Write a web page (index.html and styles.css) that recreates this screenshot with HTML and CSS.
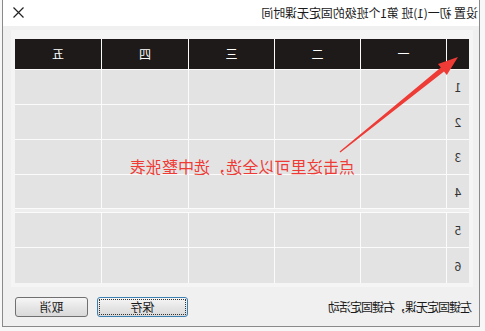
FILE: index.html
```html
<!DOCTYPE html>
<html lang="zh-CN">
<head>
    <meta charset="UTF-8">
    <meta name="viewport" content="width=device-width, initial-scale=1.0">
    <title>设置固定无课时间</title>
    <link rel="stylesheet" href="styles.css">
</head>
<body>
    <div class="stage">
        <div class="window">
            <div class="titlebar">
                <span class="title">设置 初一(1)班 第1个班级的固定无课时间</span>
                <svg class="close" width="11" height="11" viewBox="0 0 11 11">
                    <path d="M0.5 0.5 L10.5 10.5 M10.5 0.5 L0.5 10.5" stroke="#222" stroke-width="1.2" fill="none"/>
                </svg>
            </div>
            <div class="content">
                <div class="panel">
                    <div class="grid">
                        <div class="head"></div>
                        <div class="head">一</div>
                        <div class="head">二</div>
                        <div class="head">三</div>
                        <div class="head">四</div>
                        <div class="head">五</div>

                        <div class="num">1</div>
                        <div class="cell"></div><div class="cell"></div><div class="cell"></div><div class="cell"></div><div class="cell"></div>
                        <div class="num">2</div>
                        <div class="cell"></div><div class="cell"></div><div class="cell"></div><div class="cell"></div><div class="cell"></div>
                        <div class="num">3</div>
                        <div class="cell"></div><div class="cell"></div><div class="cell"></div><div class="cell"></div><div class="cell"></div>
                        <div class="num">4</div>
                        <div class="cell"></div><div class="cell"></div><div class="cell"></div><div class="cell"></div><div class="cell"></div>

                        <div class="split"></div>

                        <div class="num">5</div>
                        <div class="cell"></div><div class="cell"></div><div class="cell"></div><div class="cell"></div><div class="cell"></div>
                        <div class="num">6</div>
                        <div class="cell"></div><div class="cell"></div><div class="cell"></div><div class="cell"></div><div class="cell"></div>
                    </div>
                </div>
                <div class="footer">
                    <span class="hint">左键固定无课，右键固定活动</span>
                    <div class="buttons">
                        <button class="btn btn-save"><span>保存</span></button>
                        <button class="btn btn-cancel"><span>取消</span></button>
                    </div>
                </div>
            </div>
        </div>

        <!-- 标注：箭头和说明文字 -->
        <div class="note">点击这里可以全选，选中整张表</div>
        <svg class="arrow" width="485" height="331" viewBox="0 0 485 331">
            <polygon points="145.4,151.5 44.2,67.6 47.0,64.0 27,57 38.2,75.0 41.0,71.4 144.6,152.5" fill="#ee3b36"/>
        </svg>
    </div>
</body>
</html>
```

FILE: styles.css
```css
body {
    margin: 0;
    background: #f7f7f7;
    font-family: "Noto Sans CJK SC", "Noto Sans", sans-serif;
    font-size: 12px;
    color: #1a1a1a;
}

/* 整个截图是水平镜像的 */
.stage {
    position: relative;
    width: 485px;
    height: 331px;
    overflow: hidden;
    transform: scaleX(-1);
}

.window {
    margin-left: 5px;
    width: 476px;
    height: 326px;
    border: 1px solid #8a8a8a;
    border-top: none;
    background: #f0f0f0;
    display: flex;
    flex-direction: column;
}

.titlebar {
    height: 26px;
    background: #ffffff;
    display: flex;
    align-items: center;
    justify-content: space-between;
    padding: 0 10px 0 1px;
}

.title {
    line-height: 14px;
    letter-spacing: -0.1px;
}

.close {
    display: block;
    margin-top: -1px;
}

.content {
    flex: 1;
    padding: 4px 8px 0 6px;
    display: flex;
    flex-direction: column;
}

.panel {
    background: #f5f5f5;
    padding: 9px 4px 4px 4px;
}

.grid {
    display: grid;
    grid-template-columns: 22px 85px 85px 85px 86px 86px;
    grid-template-rows: 30px 34px 34px 34px 33px 3px 34px 35px;
    gap: 1px;
    background: #fbfbfb;
}

.head {
    background: #1e1a19;
    color: #ffffff;
    display: flex;
    align-items: center;
    justify-content: center;
    line-height: 14px;
}

.num {
    background: #e3e3e3;
    display: flex;
    align-items: center;
    justify-content: center;
    color: #333;
    line-height: 14px;
}

.cell {
    background: #e3e3e3;
}

.split {
    grid-column: 1 / -1;
    background: #eeeeee;
}

.footer {
    display: flex;
    align-items: center;
    justify-content: space-between;
    margin-top: 10px;
    height: 20px;
    padding: 0 4px 0 1px;
}

.hint {
    line-height: 14px;
    letter-spacing: -1px;
}

.buttons {
    display: flex;
    gap: 9px;
}

.btn {
    height: 20px;
    padding: 0;
    border: 1px solid #707070;
    border-radius: 3px;
    background: linear-gradient(#f6f6f6, #e6e6e6 50%, #d9d9d9);
    font-family: inherit;
    font-size: 12px;
    color: #1a1a1a;
    line-height: 14px;
}

.btn-save {
    width: 91px;
    border-color: #3c7fb1;
    padding: 1px;
}

.btn-save span {
    display: flex;
    align-items: center;
    justify-content: center;
    height: 100%;
    border: 1px dotted #333;
    box-sizing: border-box;
}

.btn-cancel {
    width: 73px;
}

.note {
    position: absolute;
    left: 130px;
    top: 156px;
    font-size: 16px;
    line-height: 20px;
    color: #ee3b36;
    letter-spacing: 0.1px;
    white-space: nowrap;
}

.arrow {
    position: absolute;
    left: 0;
    top: 0;
    pointer-events: none;
}
```
